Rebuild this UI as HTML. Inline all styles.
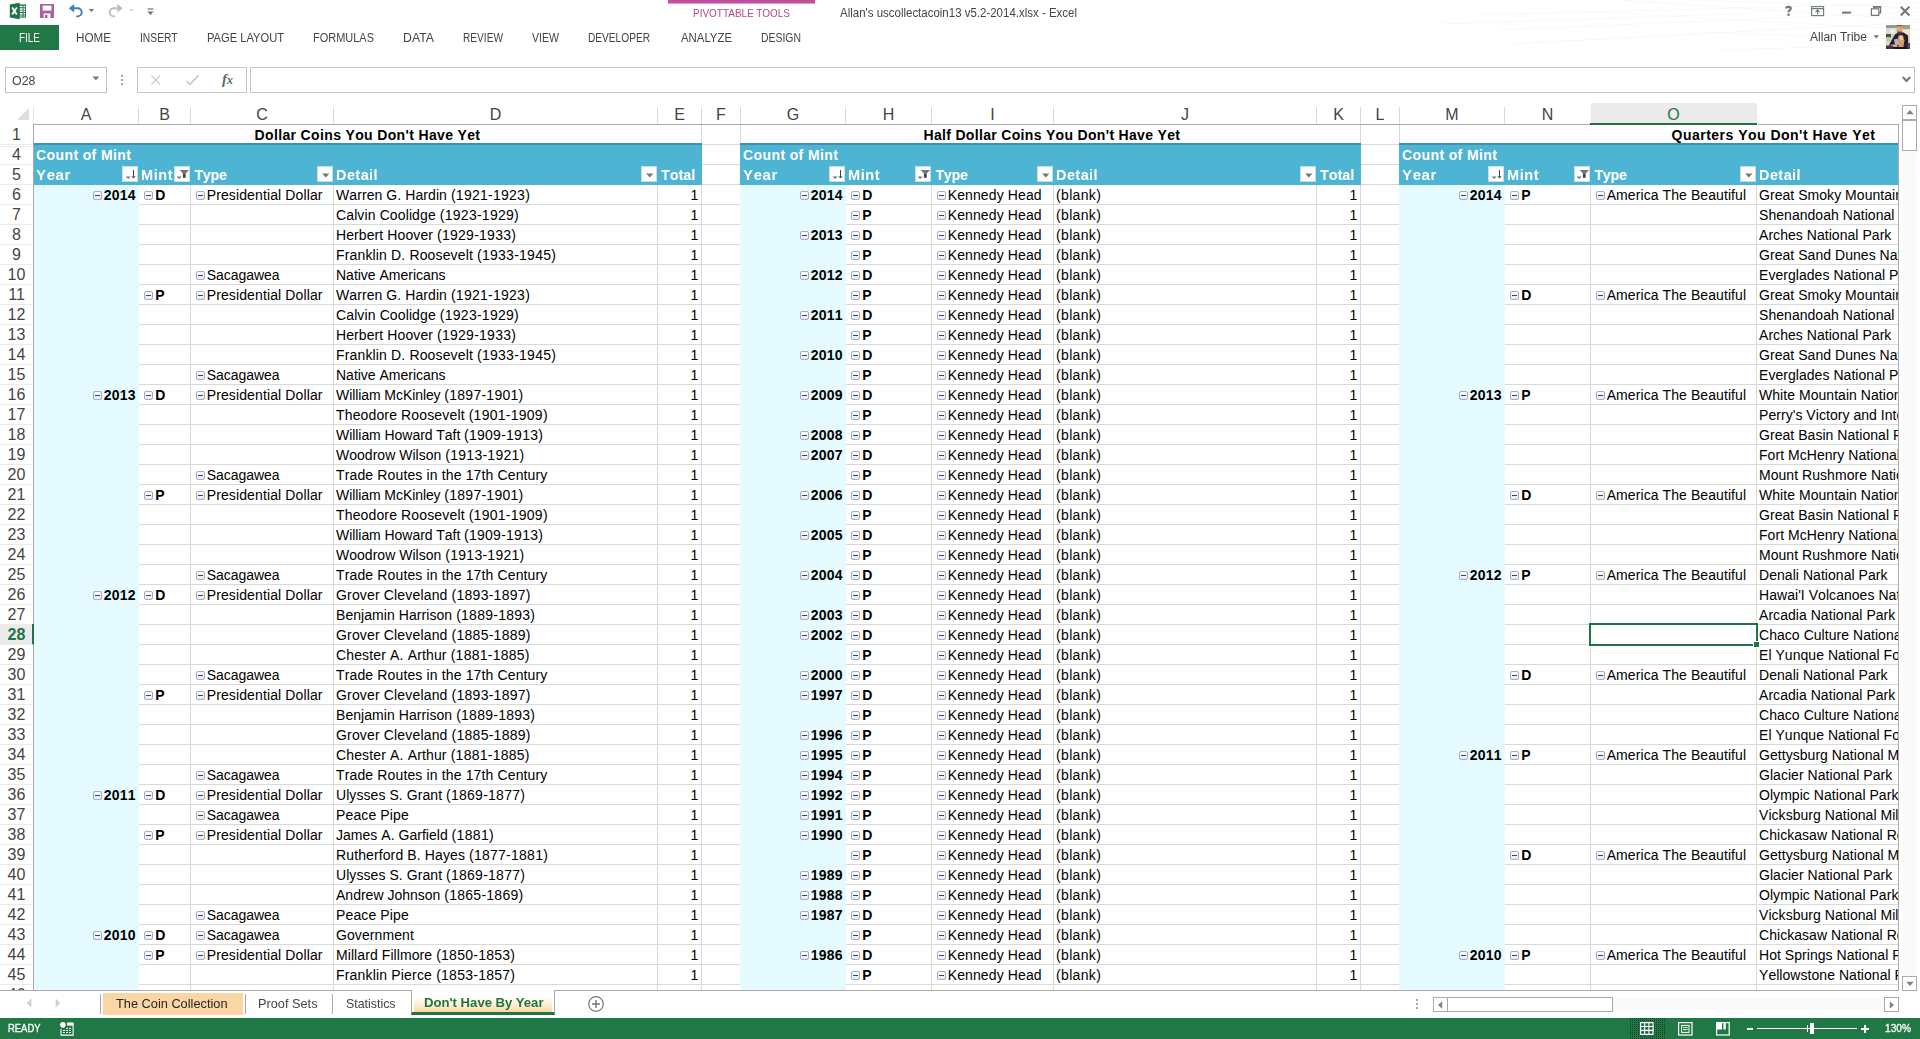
<!DOCTYPE html>
<html lang="en"><head><meta charset="utf-8"><title>Allan's uscollectacoin13 v5.2-2014.xlsx - Excel</title>
<style>
html,body{margin:0;padding:0}
body{width:1920px;height:1039px;position:relative;overflow:hidden;background:#fff;font-family:"Liberation Sans",sans-serif;color:#000}
div,span,svg{position:absolute;box-sizing:border-box}
.u{white-space:pre;transform-origin:0 50%}
.t{white-space:pre;font-kerning:none;font-size:14px;line-height:20px;height:20px;overflow:hidden}
.b{font-weight:bold}
.r{text-align:right}
.w{color:#fff}
.hd{font-size:16px;line-height:20px;height:20px;text-align:center;color:#444;white-space:pre}
.vl{width:1px;background:#d9d9d9}
.hl{height:1px;background:#d9d9d9}
.cb{width:9px;height:9px;border:1px solid #a4acc2;border-radius:2px;background:linear-gradient(#fff,#e6eaf8)}
.cb:after{content:"";position:absolute;left:1px;top:3px;width:5px;height:1px;background:#3a4262}
.dd{width:16px;height:16px;background:#fff;border:1px solid #c9dfe8}
#grid{left:0;top:103px;width:1898px;height:887px;overflow:hidden}

</style></head>
<body>
<svg style='left:1440px;top:0' width='480' height='60' viewBox='0 0 480 60'><g stroke='#f8f8f8' stroke-width='1' fill='none'>
<path d='M250 0L480 8M40 15L480 3M60 30L480 12M70 44L480 22M120 10L480 30M180 0L480 20M260 32L480 40M280 50L480 44M0 24L300 14'/></g></svg>
<svg style='left:9px;top:2px' width='18' height='18' viewBox='0 0 18 18'>
<rect x='9' y='2.4' width='8' height='13.2' fill='#217346'/>
<path d='M10.6 3.8h3v1.5h-3zM10.6 6.2h3v1.5h-3zM10.6 8.6h3v1.5h-3zM10.6 11h3v1.5h-3zM10.6 13.4h3v1.2h-3zM14.5 3.8h1.6v1.5h-1.6zM14.5 6.2h1.6v1.5h-1.6zM14.5 8.6h1.6v1.5h-1.6zM14.5 11h1.6v1.5h-1.6zM14.5 13.4h1.6v1.2h-1.6z' fill='#fff'/>
<path d='M0.8 2.6L10.6 0.8v16.4L0.8 15.4z' fill='#217346'/>
<path d='M3.1 5.5l4.7 7M7.8 5.5l-4.7 7' stroke='#fff' stroke-width='1.8' fill='none'/></svg>
<svg style='left:40px;top:4px' width='14' height='14' viewBox='0 0 14 14'>
<path d='M0 0h14v14H0z' fill='#a9609f'/><path d='M2.6 1.6h8.8v5H2.6z' fill='#fff'/><path d='M3.6 9.4h6.8V14H3.6z' fill='#fff'/><path d='M5 10.8h2.4V14H5z' fill='#a9609f'/></svg>
<svg style='left:68px;top:3px' width='28' height='15' viewBox='0 0 28 15'>
<path d='M3 5.2h6.6a4.1 4.1 0 0 1 0 8.2H8.2' fill='none' stroke='#3a82b6' stroke-width='1.9'/>
<path d='M0.8 5.2L6.2 0.9v8.6z' fill='#3a82b6'/><path d='M20.8 5.9h5.2l-2.6 3z' fill='#6b7474'/></svg>
<svg style='left:108px;top:3px' width='28' height='15' viewBox='0 0 28 15'>
<path d='M12.4 5.2H5.8a4.1 4.1 0 0 0 0 8.2h1.4' fill='none' stroke='#bdbdbd' stroke-width='1.9'/>
<path d='M14.8 5.2L9.4 0.9v8.6z' fill='#bdbdbd'/><path d='M21.2 5.9h4.6l-2.3 2.7z' fill='#d4d4d4'/></svg>
<svg style='left:147px;top:8px' width='7' height='8' viewBox='0 0 7 8'><path d='M0.6 0.4h5.8v1.2H0.6z' fill='#6b7474'/><path d='M0.4 3.4h6.2L3.5 6.9z' fill='#6b7474'/></svg>
<div style='left:668px;top:0;width:147px;height:3px;background:#c2519d'></div><div style='left:668px;top:3px;width:147px;height:1px;background:#dc9cc8'></div>
<svg style='left:1780px;top:3px' width='136' height='16' viewBox='0 0 136 16'>
<path d='M6.2 5.6c0-2.3 4.6-2.3 4.6 0 0 1.5-2.3 1.6-2.3 3.6' fill='none' stroke='#6f7979' stroke-width='2.2'/><rect x='7.3' y='10.6' width='2.4' height='2.2' fill='#6f7979'/>
<rect x='31.6' y='3.6' width='12' height='9' fill='none' stroke='#6f7979' stroke-width='1.1'/><path d='M31.6 5.6h12M37.6 11.4V7.2M35.6 9l2-2 2 2' fill='none' stroke='#6f7979' stroke-width='1.1'/>
<rect x='62' y='8.6' width='9' height='2' fill='#6f7979'/>
<rect x='91.4' y='5.8' width='7.4' height='6.6' fill='none' stroke='#6f7979' stroke-width='1.2'/><path d='M93.6 5.6V3.6h7v6.2h-1.8' fill='none' stroke='#6f7979' stroke-width='1.2'/><path d='M93.6 4h7' stroke='#6f7979' stroke-width='1.6'/>
<path d='M120.8 3.8l8.6 8.6M129.4 3.8l-8.6 8.6' stroke='#6f7979' stroke-width='2.1'/></svg>
<div style='left:0;top:25px;width:59px;height:25px;background:#1f7846'></div>
<svg style='left:1873px;top:35px' width='7' height='4' viewBox='0 0 7 4'><path d='M0.6 0.2h5.4l-2.7 3.2z' fill='#777'/></svg>
<svg style='left:1886px;top:25px' width='24' height='24' viewBox='0 0 24 24'>
<defs><filter id='bl' x='-10%' y='-10%' width='120%' height='120%'><feGaussianBlur stdDeviation='0.7'/></filter><clipPath id='cp'><rect width='24' height='24'/></clipPath></defs>
<g clip-path='url(#cp)'><rect width='24' height='24' fill='#c9d3c2'/><g filter='url(#bl)'>
<rect x='-1' y='-1' width='26' height='4' fill='#8f9c88'/><rect x='0' y='3' width='11' height='6' fill='#d3ddd0'/><rect x='4' y='4' width='5' height='4' fill='#e6efe4'/>
<rect x='17' y='1' width='8' height='3.4' fill='#98a58c'/><rect x='16.5' y='4.4' width='8' height='5' fill='#efe7b9'/><rect x='20' y='9' width='5' height='10' fill='#e3d9b4'/>
<rect x='-1' y='9' width='6' height='3.4' fill='#46553a'/><rect x='-1' y='12.4' width='5' height='4' fill='#c4cc9c'/><rect x='-1' y='16.4' width='5' height='4' fill='#cfe0d2'/>
<path d='M3.5 19L9 9.5l3-2h5.5l4.5 3 .5 13.5H3z' fill='#2a1a36'/>
<rect x='10.6' y='0.6' width='5.8' height='7.6' rx='2.4' fill='#dfa678'/><rect x='11' y='-0.5' width='5' height='1.8' fill='#8a5432'/><rect x='11.4' y='6.6' width='4.4' height='2' fill='#5a3a34'/>
<path d='M12.6 10.2h4.2l1.6 5-1 7h-4.6l-1.4-6z' fill='#d79a64'/><path d='M13.5 11l2.6-.4.8 4-2.8.6z' fill='#ecd2a8'/>
<path d='M8 14.4l3.6-1 1.2 6-3.8 1.4z' fill='#a9b8c8'/><path d='M4.6 19.6l6 .2 1.4 2-7 .2z' fill='#e8b48c'/>
<rect x='-1' y='20.6' width='8' height='4.4' fill='#3a3342'/><rect x='7' y='22' width='16' height='3' fill='#1c1422'/><rect x='21.4' y='18' width='3.6' height='7' fill='#4a4658'/>
</g></g></svg>
<div style='left:5px;top:67px;width:102px;height:26px;border:1px solid #c6c6c6;background:#fff'></div>
<svg style='left:92px;top:76px' width='8' height='5' viewBox='0 0 8 5'><path d='M0.4 0.4h7l-3.5 3.9z' fill='#777'/></svg>
<div style='left:121px;top:75px;width:2px;height:2px;background:#a8a8a8'></div><div style='left:121px;top:79px;width:2px;height:2px;background:#a8a8a8'></div><div style='left:121px;top:83px;width:2px;height:2px;background:#a8a8a8'></div>
<div style='left:137px;top:67px;width:110px;height:26px;border:1px solid #c6c6c6;background:#fff'></div>
<svg style='left:150px;top:74px' width='12' height='12' viewBox='0 0 12 12'><path d='M1.4 1.6l8.8 8.8M10.2 1.6l-8.8 8.8' stroke='#c9c9c9' stroke-width='1.3'/></svg>
<svg style='left:185px;top:74px' width='15' height='12' viewBox='0 0 15 12'><path d='M1.6 7l3.4 3.4L13.4 1.4' fill='none' stroke='#c9c9c9' stroke-width='1.7'/></svg>
<span style='left:222px;top:70px;font:italic bold 15px "Liberation Serif",serif;color:#5f6b66;line-height:18px;letter-spacing:-.3px'>f<span style='position:static;font-size:12.5px'>x</span></span>
<div style='left:250px;top:67px;width:1665px;height:26px;border:1px solid #c6c6c6;background:#fff'></div>
<svg style='left:1902px;top:76px' width='9' height='7' viewBox='0 0 9 7'><path d='M0.8 1l3.7 4 3.7-4' fill='none' stroke='#6f7979' stroke-width='1.9'/></svg>
<div style='left:1902px;top:105px;width:15px;height:15px;border:1px solid #ababab;background:#fff'></div>
<svg style='left:1906px;top:109px' width='8' height='6' viewBox='0 0 8 6'><path d='M0.3 5.2L4 1l3.7 4.2z' fill='#7d8585'/></svg>
<div style='left:1902px;top:120px;width:15px;height:31px;border:1px solid #ababab;background:#fff'></div>
<div style='left:1903px;top:151px;width:13px;height:825px;background:#fafafa'></div>
<div style='left:1902px;top:976px;width:15px;height:15px;border:1px solid #ababab;background:#fff'></div>
<svg style='left:1906px;top:981px' width='8' height='6' viewBox='0 0 8 6'><path d='M0.3 0.8L4 5l3.7-4.2z' fill='#7d8585'/></svg>
<div style='left:1898px;top:124px;width:1px;height:867px;background:#ababab'></div>
<div style='left:1416px;top:999px;width:2px;height:2px;background:#a8a8a8'></div><div style='left:1416px;top:1003px;width:2px;height:2px;background:#a8a8a8'></div><div style='left:1416px;top:1007px;width:2px;height:2px;background:#a8a8a8'></div>
<div style='left:1433px;top:997px;width:15px;height:15px;border:1px solid #ababab;background:#fff'></div>
<svg style='left:1437px;top:1001px' width='6' height='8' viewBox='0 0 6 8'><path d='M5.2 0.3L1 4l4.2 3.7z' fill='#7d8585'/></svg>
<div style='left:1447px;top:997px;width:166px;height:15px;border:1px solid #ababab;background:#fff'></div>
<div style='left:1613px;top:998px;width:271px;height:13px;background:#fafafa'></div>
<div style='left:1884px;top:997px;width:15px;height:15px;border:1px solid #ababab;background:#fff'></div>
<svg style='left:1889px;top:1001px' width='6' height='8' viewBox='0 0 6 8'><path d='M0.8 0.3L5 4 0.8 7.7z' fill='#7d8585'/></svg>
<div style='left:0;top:990px;width:1899px;height:1px;background:#ababab'></div>
<svg style='left:26px;top:998px' width='6' height='10' viewBox='0 0 6 10'><path d='M5.4 0.6L0.8 5l4.6 4.4z' fill='#cfcfcf'/></svg>
<svg style='left:55px;top:998px' width='6' height='10' viewBox='0 0 6 10'><path d='M0.6 0.6L5.2 5 0.6 9.4z' fill='#cfcfcf'/></svg>
<div style='left:103px;top:993px;width:140px;height:22px;background:#fcd5a4'></div>
<div style='left:100px;top:994px;width:1px;height:20px;background:#ababab'></div>
<div style='left:245px;top:994px;width:1px;height:20px;background:#ababab'></div>
<div style='left:332px;top:994px;width:1px;height:20px;background:#ababab'></div>
<div style='left:411px;top:990px;width:144px;height:25px;background:#fff;border-left:1px solid #ababab;border-right:1px solid #ababab;border-bottom:3px solid #217346'><div style='left:2px;top:3px;width:138px;height:19px;background:linear-gradient(#fff 20%,#fdeccb 70%,#fbd999)'></div></div>
<svg style='left:587px;top:995px' width='18' height='18' viewBox='0 0 18 18'><circle cx='9' cy='9' r='7.3' fill='#fff' stroke='#767676' stroke-width='1.2'/><path d='M9 5v8M5 9h8' stroke='#767676' stroke-width='1.4'/></svg>
<div style='left:0;top:1018px;width:1920px;height:21px;background:#1f7846'></div>
<svg style='left:60px;top:1021px' width='14' height='15' viewBox='0 0 14 15'>
<path d='M7.1 2h6v12.1H1V8' fill='none' stroke='#fff' stroke-width='1.1'/><rect x='7.1' y='2' width='6' height='2.6' fill='#fff'/>
<circle cx='2.9' cy='3.9' r='3.5' fill='#1a6a3e'/><circle cx='2.9' cy='3.9' r='2.8' fill='#fff'/>
<path d='M6 7.4h2M9 7.4h2M3 9.5h2M6 9.5h2M9 9.5h2M3 11.5h2M6 11.5h2M9 11.5h2' stroke='#e8fff0' stroke-width='1'/></svg>
<div style='left:1629px;top:1018px;width:37px;height:21px;background:repeating-conic-gradient(#143f28 0 25%,#1f7846 0 100%) 0 0/2px 2px'></div>
<svg style='left:1640px;top:1022px' width='14' height='13' viewBox='0 0 14 13'><rect x='.6' y='.6' width='12.4' height='11.8' fill='none' stroke='#fff' stroke-width='1.2'/><path d='M4.7 0v13M8.9 0v13M0 4.5h14M0 8.4h14' stroke='#fff' stroke-width='1.1'/></svg>
<svg style='left:1678px;top:1022px' width='15' height='14' viewBox='0 0 15 14'><rect x='.6' y='.6' width='13.4' height='12.4' fill='none' stroke='#fff' stroke-width='1.2'/><rect x='3.6' y='3.4' width='7.4' height='7' fill='none' stroke='#fff' stroke-width='1'/><path d='M5 5.6h4.6M5 7.6h4.6' stroke='#fff' stroke-width='.9'/></svg>
<svg style='left:1716px;top:1022px' width='14' height='14' viewBox='0 0 14 14'><rect x='.6' y='.6' width='12.6' height='12.4' fill='none' stroke='#fff' stroke-width='1.2'/><path d='M1 1h5v6.4H1zM7.4 1H9.8v6.4H7.4z' fill='#fff'/></svg>
<div style='left:1747px;top:1028px;width:6px;height:2px;background:#fff'></div>
<div style='left:1757px;top:1028px;width:100px;height:1px;background:#fff'></div>
<div style='left:1807px;top:1025px;width:1px;height:7px;background:#fff'></div>
<div style='left:1810px;top:1023px;width:4px;height:11px;background:#fff'></div>
<div style='left:1861px;top:1028px;width:8px;height:2px;background:#fff'></div><div style='left:1864px;top:1025px;width:2px;height:8px;background:#fff'></div>
<div id='grid'><div class='hl' style='left:34px;top:41px;width:1864px'></div>
<div class='hl' style='left:34px;top:61px;width:1864px'></div>
<div class='hl' style='left:34px;top:81px;width:1864px'></div>
<div class='hl' style='left:34px;top:101px;width:1864px'></div>
<div class='hl' style='left:34px;top:121px;width:1864px'></div>
<div class='hl' style='left:34px;top:141px;width:1864px'></div>
<div class='hl' style='left:34px;top:161px;width:1864px'></div>
<div class='hl' style='left:34px;top:181px;width:1864px'></div>
<div class='hl' style='left:34px;top:201px;width:1864px'></div>
<div class='hl' style='left:34px;top:221px;width:1864px'></div>
<div class='hl' style='left:34px;top:241px;width:1864px'></div>
<div class='hl' style='left:34px;top:261px;width:1864px'></div>
<div class='hl' style='left:34px;top:281px;width:1864px'></div>
<div class='hl' style='left:34px;top:301px;width:1864px'></div>
<div class='hl' style='left:34px;top:321px;width:1864px'></div>
<div class='hl' style='left:34px;top:341px;width:1864px'></div>
<div class='hl' style='left:34px;top:361px;width:1864px'></div>
<div class='hl' style='left:34px;top:381px;width:1864px'></div>
<div class='hl' style='left:34px;top:401px;width:1864px'></div>
<div class='hl' style='left:34px;top:421px;width:1864px'></div>
<div class='hl' style='left:34px;top:441px;width:1864px'></div>
<div class='hl' style='left:34px;top:461px;width:1864px'></div>
<div class='hl' style='left:34px;top:481px;width:1864px'></div>
<div class='hl' style='left:34px;top:501px;width:1864px'></div>
<div class='hl' style='left:34px;top:521px;width:1864px'></div>
<div class='hl' style='left:34px;top:541px;width:1864px'></div>
<div class='hl' style='left:34px;top:561px;width:1864px'></div>
<div class='hl' style='left:34px;top:581px;width:1864px'></div>
<div class='hl' style='left:34px;top:601px;width:1864px'></div>
<div class='hl' style='left:34px;top:621px;width:1864px'></div>
<div class='hl' style='left:34px;top:641px;width:1864px'></div>
<div class='hl' style='left:34px;top:661px;width:1864px'></div>
<div class='hl' style='left:34px;top:681px;width:1864px'></div>
<div class='hl' style='left:34px;top:701px;width:1864px'></div>
<div class='hl' style='left:34px;top:721px;width:1864px'></div>
<div class='hl' style='left:34px;top:741px;width:1864px'></div>
<div class='hl' style='left:34px;top:761px;width:1864px'></div>
<div class='hl' style='left:34px;top:781px;width:1864px'></div>
<div class='hl' style='left:34px;top:801px;width:1864px'></div>
<div class='hl' style='left:34px;top:821px;width:1864px'></div>
<div class='hl' style='left:34px;top:841px;width:1864px'></div>
<div class='hl' style='left:34px;top:861px;width:1864px'></div>
<div class='hl' style='left:34px;top:881px;width:1864px'></div>
<div class='hl' style='left:34px;top:901px;width:1864px'></div>
<div class='vl' style='left:190px;top:22px;height:865px'></div>
<div class='vl' style='left:333px;top:22px;height:865px'></div>
<div class='vl' style='left:657px;top:22px;height:865px'></div>
<div class='vl' style='left:701px;top:22px;height:865px'></div>
<div class='vl' style='left:740px;top:22px;height:865px'></div>
<div class='vl' style='left:931px;top:22px;height:865px'></div>
<div class='vl' style='left:1053px;top:22px;height:865px'></div>
<div class='vl' style='left:1316px;top:22px;height:865px'></div>
<div class='vl' style='left:1360px;top:22px;height:865px'></div>
<div class='vl' style='left:1399px;top:22px;height:865px'></div>
<div class='vl' style='left:1590px;top:22px;height:865px'></div>
<div class='vl' style='left:1756px;top:22px;height:865px'></div>
<div style='left:34px;top:22px;width:667px;height:19px;background:#fff'></div>
<div class='t b' style='left:34px;top:22px;width:667px;text-align:center;overflow:visible;letter-spacing:0.35px'>Dollar Coins You Don&#x27;t Have Yet</div>
<div style='left:741px;top:22px;width:619px;height:19px;background:#fff'></div>
<div class='t b' style='left:742.4px;top:22px;width:619px;text-align:center;overflow:visible;letter-spacing:0.32px'>Half Dollar Coins You Don&#x27;t Have Yet</div>
<div style='left:1400px;top:22px;width:498px;height:19px;background:#fff'></div>
<div class='t b' style='left:1473.5px;top:22px;width:600px;text-align:center;overflow:visible;letter-spacing:0.485px'>Quarters You Don&#x27;t Have Yet</div>
<div style='left:34px;top:40px;width:668px;height:42px;background:#4db4d4;border-top:2px solid #3a93b0'></div>
<div style='left:34px;top:82px;width:105px;height:805px;background:#e6fbff'></div>
<div class='t b w' style='left:36.1px;top:42px;width:200px;letter-spacing:.38px'>Count of Mint</div>
<div class='t b w' style='left:36.0px;top:62px;width:104px;letter-spacing:0.55px;transform:scaleX(1.075);transform-origin:0 50%'>Year</div>
<div class='dd' style='left:122px;top:63px'><svg style='left:0;top:0' width='16' height='16' viewBox='0 0 16 16'><path d='M2.6 9.4h5l-2.5 2.7z' fill='#6e7878'/><path d='M10.5 3v7.6M8.9 9.2l1.6 1.9 1.6-1.9' stroke='#3c4444' stroke-width='1' fill='none'/></svg></div>
<div class='t b w' style='left:140.5px;top:62px;width:51px;letter-spacing:0.5px;transform:scaleX(1.04);transform-origin:0 50%'>Mint</div>
<div class='dd' style='left:174px;top:63px'><svg style='left:0;top:0' width='16' height='16' viewBox='0 0 16 16'><path d='M1.6 9.4h5l-2.5 2.7z' fill='#6e7878'/><path d='M4.6 3h9.4l-3.3 3.6h-2.8z' fill='#6e7878'/><path d='M7.9 6.4h2.8v4.4h-2.8z' fill='#3f454f'/></svg></div>
<div class='t b w' style='left:194.4px;top:62px;width:142px;letter-spacing:-0.07px;transform:scaleX(1);transform-origin:0 50%'>Type</div>
<div class='dd' style='left:317px;top:63px'><svg style='left:0;top:0' width='16' height='16' viewBox='0 0 16 16'><path d='M4.2 6.6h7.2l-3.6 3.8z' fill='#6e7878'/></svg></div>
<div class='t b w' style='left:335.5px;top:62px;width:323px;letter-spacing:0.45px;transform:scaleX(1.03);transform-origin:0 50%'>Detail</div>
<div class='dd' style='left:641px;top:63px'><svg style='left:0;top:0' width='16' height='16' viewBox='0 0 16 16'><path d='M4.2 6.6h7.2l-3.6 3.8z' fill='#6e7878'/></svg></div>
<div class='t b w' style='left:661px;top:62px;width:60px;letter-spacing:.2px'>Total</div>
<div class='t b r' style='left:34px;top:82px;width:101.69999999999999px;letter-spacing:0.214px;'>2014</div>
<div class='cb' style='left:93px;top:88px'></div>
<div class='cb' style='left:144px;top:88px'></div>
<div class='t b' style='left:155.2px;top:82px;width:30px;letter-spacing:-0.110px;'>D</div>
<div class='cb' style='left:196px;top:88px'></div>
<div class='t ' style='left:206.7px;top:82px;width:126px;letter-spacing:0.121px'>Presidential Dollar</div>
<div class='t ' style='left:336px;top:82px;width:321px;letter-spacing:0.080px'>Warren G. Hardin <span style='position:static;letter-spacing:0.256px'>(1921-1923)</span></div>
<div class='t r' style='left:658px;top:82px;width:40.39999999999998px;letter-spacing:.045px;'>1</div>
<div class='t ' style='left:336px;top:102px;width:321px;letter-spacing:0.119px'>Calvin Coolidge <span style='position:static;letter-spacing:0.256px'>(1923-1929)</span></div>
<div class='t r' style='left:658px;top:102px;width:40.39999999999998px;letter-spacing:.045px;'>1</div>
<div class='t ' style='left:336px;top:122px;width:321px;letter-spacing:0.096px'>Herbert Hoover <span style='position:static;letter-spacing:0.256px'>(1929-1933)</span></div>
<div class='t r' style='left:658px;top:122px;width:40.39999999999998px;letter-spacing:.045px;'>1</div>
<div class='t ' style='left:336px;top:142px;width:321px;letter-spacing:0.151px'>Franklin D. Roosevelt <span style='position:static;letter-spacing:0.256px'>(1933-1945)</span></div>
<div class='t r' style='left:658px;top:142px;width:40.39999999999998px;letter-spacing:.045px;'>1</div>
<div class='cb' style='left:196px;top:168px'></div>
<div class='t ' style='left:206.7px;top:162px;width:126px;letter-spacing:-0.029px'>Sacagawea</div>
<div class='t ' style='left:336px;top:162px;width:321px;letter-spacing:-0.010px'>Native Americans</div>
<div class='t r' style='left:658px;top:162px;width:40.39999999999998px;letter-spacing:.045px;'>1</div>
<div class='cb' style='left:144px;top:188px'></div>
<div class='t b' style='left:155.2px;top:182px;width:30px;letter-spacing:-0.338px;'>P</div>
<div class='cb' style='left:196px;top:188px'></div>
<div class='t ' style='left:206.7px;top:182px;width:126px;letter-spacing:0.121px'>Presidential Dollar</div>
<div class='t ' style='left:336px;top:182px;width:321px;letter-spacing:0.080px'>Warren G. Hardin <span style='position:static;letter-spacing:0.256px'>(1921-1923)</span></div>
<div class='t r' style='left:658px;top:182px;width:40.39999999999998px;letter-spacing:.045px;'>1</div>
<div class='t ' style='left:336px;top:202px;width:321px;letter-spacing:0.119px'>Calvin Coolidge <span style='position:static;letter-spacing:0.256px'>(1923-1929)</span></div>
<div class='t r' style='left:658px;top:202px;width:40.39999999999998px;letter-spacing:.045px;'>1</div>
<div class='t ' style='left:336px;top:222px;width:321px;letter-spacing:0.096px'>Herbert Hoover <span style='position:static;letter-spacing:0.256px'>(1929-1933)</span></div>
<div class='t r' style='left:658px;top:222px;width:40.39999999999998px;letter-spacing:.045px;'>1</div>
<div class='t ' style='left:336px;top:242px;width:321px;letter-spacing:0.151px'>Franklin D. Roosevelt <span style='position:static;letter-spacing:0.256px'>(1933-1945)</span></div>
<div class='t r' style='left:658px;top:242px;width:40.39999999999998px;letter-spacing:.045px;'>1</div>
<div class='cb' style='left:196px;top:268px'></div>
<div class='t ' style='left:206.7px;top:262px;width:126px;letter-spacing:-0.029px'>Sacagawea</div>
<div class='t ' style='left:336px;top:262px;width:321px;letter-spacing:-0.010px'>Native Americans</div>
<div class='t r' style='left:658px;top:262px;width:40.39999999999998px;letter-spacing:.045px;'>1</div>
<div class='t b r' style='left:34px;top:282px;width:101.69999999999999px;letter-spacing:0.214px;'>2013</div>
<div class='cb' style='left:93px;top:288px'></div>
<div class='cb' style='left:144px;top:288px'></div>
<div class='t b' style='left:155.2px;top:282px;width:30px;letter-spacing:-0.110px;'>D</div>
<div class='cb' style='left:196px;top:288px'></div>
<div class='t ' style='left:206.7px;top:282px;width:126px;letter-spacing:0.121px'>Presidential Dollar</div>
<div class='t ' style='left:336px;top:282px;width:321px;letter-spacing:-0.078px'>William McKinley <span style='position:static;letter-spacing:0.256px'>(1897-1901)</span></div>
<div class='t r' style='left:658px;top:282px;width:40.39999999999998px;letter-spacing:.045px;'>1</div>
<div class='t ' style='left:336px;top:302px;width:321px;letter-spacing:0.144px'>Theodore Roosevelt <span style='position:static;letter-spacing:0.256px'>(1901-1909)</span></div>
<div class='t r' style='left:658px;top:302px;width:40.39999999999998px;letter-spacing:.045px;'>1</div>
<div class='t ' style='left:336px;top:322px;width:321px;letter-spacing:-0.054px'>William Howard Taft <span style='position:static;letter-spacing:0.256px'>(1909-1913)</span></div>
<div class='t r' style='left:658px;top:322px;width:40.39999999999998px;letter-spacing:.045px;'>1</div>
<div class='t ' style='left:336px;top:342px;width:321px;letter-spacing:0.028px'>Woodrow Wilson <span style='position:static;letter-spacing:0.256px'>(1913-1921)</span></div>
<div class='t r' style='left:658px;top:342px;width:40.39999999999998px;letter-spacing:.045px;'>1</div>
<div class='cb' style='left:196px;top:368px'></div>
<div class='t ' style='left:206.7px;top:362px;width:126px;letter-spacing:-0.029px'>Sacagawea</div>
<div class='t ' style='left:336px;top:362px;width:321px;letter-spacing:0.140px'>Trade Routes in the 17th Century</div>
<div class='t r' style='left:658px;top:362px;width:40.39999999999998px;letter-spacing:.045px;'>1</div>
<div class='cb' style='left:144px;top:388px'></div>
<div class='t b' style='left:155.2px;top:382px;width:30px;letter-spacing:-0.338px;'>P</div>
<div class='cb' style='left:196px;top:388px'></div>
<div class='t ' style='left:206.7px;top:382px;width:126px;letter-spacing:0.121px'>Presidential Dollar</div>
<div class='t ' style='left:336px;top:382px;width:321px;letter-spacing:-0.078px'>William McKinley <span style='position:static;letter-spacing:0.256px'>(1897-1901)</span></div>
<div class='t r' style='left:658px;top:382px;width:40.39999999999998px;letter-spacing:.045px;'>1</div>
<div class='t ' style='left:336px;top:402px;width:321px;letter-spacing:0.144px'>Theodore Roosevelt <span style='position:static;letter-spacing:0.256px'>(1901-1909)</span></div>
<div class='t r' style='left:658px;top:402px;width:40.39999999999998px;letter-spacing:.045px;'>1</div>
<div class='t ' style='left:336px;top:422px;width:321px;letter-spacing:-0.054px'>William Howard Taft <span style='position:static;letter-spacing:0.256px'>(1909-1913)</span></div>
<div class='t r' style='left:658px;top:422px;width:40.39999999999998px;letter-spacing:.045px;'>1</div>
<div class='t ' style='left:336px;top:442px;width:321px;letter-spacing:0.028px'>Woodrow Wilson <span style='position:static;letter-spacing:0.256px'>(1913-1921)</span></div>
<div class='t r' style='left:658px;top:442px;width:40.39999999999998px;letter-spacing:.045px;'>1</div>
<div class='cb' style='left:196px;top:468px'></div>
<div class='t ' style='left:206.7px;top:462px;width:126px;letter-spacing:-0.029px'>Sacagawea</div>
<div class='t ' style='left:336px;top:462px;width:321px;letter-spacing:0.140px'>Trade Routes in the 17th Century</div>
<div class='t r' style='left:658px;top:462px;width:40.39999999999998px;letter-spacing:.045px;'>1</div>
<div class='t b r' style='left:34px;top:482px;width:101.69999999999999px;letter-spacing:0.214px;'>2012</div>
<div class='cb' style='left:93px;top:488px'></div>
<div class='cb' style='left:144px;top:488px'></div>
<div class='t b' style='left:155.2px;top:482px;width:30px;letter-spacing:-0.110px;'>D</div>
<div class='cb' style='left:196px;top:488px'></div>
<div class='t ' style='left:206.7px;top:482px;width:126px;letter-spacing:0.121px'>Presidential Dollar</div>
<div class='t ' style='left:336px;top:482px;width:321px;letter-spacing:0.162px'>Grover Cleveland <span style='position:static;letter-spacing:0.256px'>(1893-1897)</span></div>
<div class='t r' style='left:658px;top:482px;width:40.39999999999998px;letter-spacing:.045px;'>1</div>
<div class='t ' style='left:336px;top:502px;width:321px;letter-spacing:0.060px'>Benjamin Harrison <span style='position:static;letter-spacing:0.256px'>(1889-1893)</span></div>
<div class='t r' style='left:658px;top:502px;width:40.39999999999998px;letter-spacing:.045px;'>1</div>
<div class='t ' style='left:336px;top:522px;width:321px;letter-spacing:0.162px'>Grover Cleveland <span style='position:static;letter-spacing:0.256px'>(1885-1889)</span></div>
<div class='t r' style='left:658px;top:522px;width:40.39999999999998px;letter-spacing:.045px;'>1</div>
<div class='t ' style='left:336px;top:542px;width:321px;letter-spacing:0.147px'>Chester A. Arthur <span style='position:static;letter-spacing:0.256px'>(1881-1885)</span></div>
<div class='t r' style='left:658px;top:542px;width:40.39999999999998px;letter-spacing:.045px;'>1</div>
<div class='cb' style='left:196px;top:568px'></div>
<div class='t ' style='left:206.7px;top:562px;width:126px;letter-spacing:-0.029px'>Sacagawea</div>
<div class='t ' style='left:336px;top:562px;width:321px;letter-spacing:0.140px'>Trade Routes in the 17th Century</div>
<div class='t r' style='left:658px;top:562px;width:40.39999999999998px;letter-spacing:.045px;'>1</div>
<div class='cb' style='left:144px;top:588px'></div>
<div class='t b' style='left:155.2px;top:582px;width:30px;letter-spacing:-0.338px;'>P</div>
<div class='cb' style='left:196px;top:588px'></div>
<div class='t ' style='left:206.7px;top:582px;width:126px;letter-spacing:0.121px'>Presidential Dollar</div>
<div class='t ' style='left:336px;top:582px;width:321px;letter-spacing:0.162px'>Grover Cleveland <span style='position:static;letter-spacing:0.256px'>(1893-1897)</span></div>
<div class='t r' style='left:658px;top:582px;width:40.39999999999998px;letter-spacing:.045px;'>1</div>
<div class='t ' style='left:336px;top:602px;width:321px;letter-spacing:0.060px'>Benjamin Harrison <span style='position:static;letter-spacing:0.256px'>(1889-1893)</span></div>
<div class='t r' style='left:658px;top:602px;width:40.39999999999998px;letter-spacing:.045px;'>1</div>
<div class='t ' style='left:336px;top:622px;width:321px;letter-spacing:0.162px'>Grover Cleveland <span style='position:static;letter-spacing:0.256px'>(1885-1889)</span></div>
<div class='t r' style='left:658px;top:622px;width:40.39999999999998px;letter-spacing:.045px;'>1</div>
<div class='t ' style='left:336px;top:642px;width:321px;letter-spacing:0.147px'>Chester A. Arthur <span style='position:static;letter-spacing:0.256px'>(1881-1885)</span></div>
<div class='t r' style='left:658px;top:642px;width:40.39999999999998px;letter-spacing:.045px;'>1</div>
<div class='cb' style='left:196px;top:668px'></div>
<div class='t ' style='left:206.7px;top:662px;width:126px;letter-spacing:-0.029px'>Sacagawea</div>
<div class='t ' style='left:336px;top:662px;width:321px;letter-spacing:0.140px'>Trade Routes in the 17th Century</div>
<div class='t r' style='left:658px;top:662px;width:40.39999999999998px;letter-spacing:.045px;'>1</div>
<div class='t b r' style='left:34px;top:682px;width:101.69999999999999px;letter-spacing:0.214px;'>2011</div>
<div class='cb' style='left:93px;top:688px'></div>
<div class='cb' style='left:144px;top:688px'></div>
<div class='t b' style='left:155.2px;top:682px;width:30px;letter-spacing:-0.110px;'>D</div>
<div class='cb' style='left:196px;top:688px'></div>
<div class='t ' style='left:206.7px;top:682px;width:126px;letter-spacing:0.121px'>Presidential Dollar</div>
<div class='t ' style='left:336px;top:682px;width:321px;letter-spacing:0.067px'>Ulysses S. Grant <span style='position:static;letter-spacing:0.256px'>(1869-1877)</span></div>
<div class='t r' style='left:658px;top:682px;width:40.39999999999998px;letter-spacing:.045px;'>1</div>
<div class='cb' style='left:196px;top:708px'></div>
<div class='t ' style='left:206.7px;top:702px;width:126px;letter-spacing:-0.029px'>Sacagawea</div>
<div class='t ' style='left:336px;top:702px;width:321px;letter-spacing:0.129px'>Peace Pipe</div>
<div class='t r' style='left:658px;top:702px;width:40.39999999999998px;letter-spacing:.045px;'>1</div>
<div class='cb' style='left:144px;top:728px'></div>
<div class='t b' style='left:155.2px;top:722px;width:30px;letter-spacing:-0.338px;'>P</div>
<div class='cb' style='left:196px;top:728px'></div>
<div class='t ' style='left:206.7px;top:722px;width:126px;letter-spacing:0.121px'>Presidential Dollar</div>
<div class='t ' style='left:336px;top:722px;width:321px;letter-spacing:0.025px'>James A. Garfield <span style='position:static;letter-spacing:0.314px'>(1881)</span></div>
<div class='t r' style='left:658px;top:722px;width:40.39999999999998px;letter-spacing:.045px;'>1</div>
<div class='t ' style='left:336px;top:742px;width:321px;letter-spacing:0.115px'>Rutherford B. Hayes <span style='position:static;letter-spacing:0.256px'>(1877-1881)</span></div>
<div class='t r' style='left:658px;top:742px;width:40.39999999999998px;letter-spacing:.045px;'>1</div>
<div class='t ' style='left:336px;top:762px;width:321px;letter-spacing:0.067px'>Ulysses S. Grant <span style='position:static;letter-spacing:0.256px'>(1869-1877)</span></div>
<div class='t r' style='left:658px;top:762px;width:40.39999999999998px;letter-spacing:.045px;'>1</div>
<div class='t ' style='left:336px;top:782px;width:321px;letter-spacing:0.009px'>Andrew Johnson <span style='position:static;letter-spacing:0.256px'>(1865-1869)</span></div>
<div class='t r' style='left:658px;top:782px;width:40.39999999999998px;letter-spacing:.045px;'>1</div>
<div class='cb' style='left:196px;top:808px'></div>
<div class='t ' style='left:206.7px;top:802px;width:126px;letter-spacing:-0.029px'>Sacagawea</div>
<div class='t ' style='left:336px;top:802px;width:321px;letter-spacing:0.129px'>Peace Pipe</div>
<div class='t r' style='left:658px;top:802px;width:40.39999999999998px;letter-spacing:.045px;'>1</div>
<div class='t b r' style='left:34px;top:822px;width:101.69999999999999px;letter-spacing:0.214px;'>2010</div>
<div class='cb' style='left:93px;top:828px'></div>
<div class='cb' style='left:144px;top:828px'></div>
<div class='t b' style='left:155.2px;top:822px;width:30px;letter-spacing:-0.110px;'>D</div>
<div class='cb' style='left:196px;top:828px'></div>
<div class='t ' style='left:206.7px;top:822px;width:126px;letter-spacing:-0.029px'>Sacagawea</div>
<div class='t ' style='left:336px;top:822px;width:321px;letter-spacing:0.086px'>Government</div>
<div class='t r' style='left:658px;top:822px;width:40.39999999999998px;letter-spacing:.045px;'>1</div>
<div class='cb' style='left:144px;top:848px'></div>
<div class='t b' style='left:155.2px;top:842px;width:30px;letter-spacing:-0.338px;'>P</div>
<div class='cb' style='left:196px;top:848px'></div>
<div class='t ' style='left:206.7px;top:842px;width:126px;letter-spacing:0.121px'>Presidential Dollar</div>
<div class='t ' style='left:336px;top:842px;width:321px;letter-spacing:0.079px'>Millard Fillmore <span style='position:static;letter-spacing:0.256px'>(1850-1853)</span></div>
<div class='t r' style='left:658px;top:842px;width:40.39999999999998px;letter-spacing:.045px;'>1</div>
<div class='t ' style='left:336px;top:862px;width:321px;letter-spacing:0.180px'>Franklin Pierce <span style='position:static;letter-spacing:0.256px'>(1853-1857)</span></div>
<div class='t r' style='left:658px;top:862px;width:40.39999999999998px;letter-spacing:.045px;'>1</div>
<div style='left:740px;top:40px;width:621px;height:42px;background:#4db4d4;border-top:2px solid #3a93b0'></div>
<div style='left:740px;top:82px;width:106px;height:805px;background:#e6fbff'></div>
<div class='t b w' style='left:743.1px;top:42px;width:200px;letter-spacing:.38px'>Count of Mint</div>
<div class='t b w' style='left:743.0px;top:62px;width:104px;letter-spacing:0.55px;transform:scaleX(1.075);transform-origin:0 50%'>Year</div>
<div class='dd' style='left:829px;top:63px'><svg style='left:0;top:0' width='16' height='16' viewBox='0 0 16 16'><path d='M2.6 9.4h5l-2.5 2.7z' fill='#6e7878'/><path d='M10.5 3v7.6M8.9 9.2l1.6 1.9 1.6-1.9' stroke='#3c4444' stroke-width='1' fill='none'/></svg></div>
<div class='t b w' style='left:847.5px;top:62px;width:85px;letter-spacing:0.5px;transform:scaleX(1.04);transform-origin:0 50%'>Mint</div>
<div class='dd' style='left:915px;top:63px'><svg style='left:0;top:0' width='16' height='16' viewBox='0 0 16 16'><path d='M1.6 9.4h5l-2.5 2.7z' fill='#6e7878'/><path d='M4.6 3h9.4l-3.3 3.6h-2.8z' fill='#6e7878'/><path d='M7.9 6.4h2.8v4.4h-2.8z' fill='#3f454f'/></svg></div>
<div class='t b w' style='left:935.4px;top:62px;width:121px;letter-spacing:-0.07px;transform:scaleX(1);transform-origin:0 50%'>Type</div>
<div class='dd' style='left:1037px;top:63px'><svg style='left:0;top:0' width='16' height='16' viewBox='0 0 16 16'><path d='M4.2 6.6h7.2l-3.6 3.8z' fill='#6e7878'/></svg></div>
<div class='t b w' style='left:1055.5px;top:62px;width:262px;letter-spacing:0.45px;transform:scaleX(1.03);transform-origin:0 50%'>Detail</div>
<div class='dd' style='left:1300px;top:63px'><svg style='left:0;top:0' width='16' height='16' viewBox='0 0 16 16'><path d='M4.2 6.6h7.2l-3.6 3.8z' fill='#6e7878'/></svg></div>
<div class='t b w' style='left:1320px;top:62px;width:60px;letter-spacing:.2px'>Total</div>
<div class='t b r' style='left:741px;top:82px;width:101.70000000000005px;letter-spacing:0.214px;'>2014</div>
<div class='cb' style='left:800px;top:88px'></div>
<div class='cb' style='left:851px;top:88px'></div>
<div class='t b' style='left:862.2px;top:82px;width:30px;letter-spacing:-0.110px;'>D</div>
<div class='cb' style='left:937px;top:88px'></div>
<div class='t ' style='left:947.7px;top:82px;width:105px;letter-spacing:0.120px'>Kennedy Head</div>
<div class='t ' style='left:1056px;top:82px;width:260px;letter-spacing:0.341px'>(blank)</div>
<div class='t r' style='left:1317px;top:82px;width:40.40000000000009px;letter-spacing:.045px;'>1</div>
<div class='cb' style='left:851px;top:108px'></div>
<div class='t b' style='left:862.2px;top:102px;width:30px;letter-spacing:-0.338px;'>P</div>
<div class='cb' style='left:937px;top:108px'></div>
<div class='t ' style='left:947.7px;top:102px;width:105px;letter-spacing:0.120px'>Kennedy Head</div>
<div class='t ' style='left:1056px;top:102px;width:260px;letter-spacing:0.341px'>(blank)</div>
<div class='t r' style='left:1317px;top:102px;width:40.40000000000009px;letter-spacing:.045px;'>1</div>
<div class='t b r' style='left:741px;top:122px;width:101.70000000000005px;letter-spacing:0.214px;'>2013</div>
<div class='cb' style='left:800px;top:128px'></div>
<div class='cb' style='left:851px;top:128px'></div>
<div class='t b' style='left:862.2px;top:122px;width:30px;letter-spacing:-0.110px;'>D</div>
<div class='cb' style='left:937px;top:128px'></div>
<div class='t ' style='left:947.7px;top:122px;width:105px;letter-spacing:0.120px'>Kennedy Head</div>
<div class='t ' style='left:1056px;top:122px;width:260px;letter-spacing:0.341px'>(blank)</div>
<div class='t r' style='left:1317px;top:122px;width:40.40000000000009px;letter-spacing:.045px;'>1</div>
<div class='cb' style='left:851px;top:148px'></div>
<div class='t b' style='left:862.2px;top:142px;width:30px;letter-spacing:-0.338px;'>P</div>
<div class='cb' style='left:937px;top:148px'></div>
<div class='t ' style='left:947.7px;top:142px;width:105px;letter-spacing:0.120px'>Kennedy Head</div>
<div class='t ' style='left:1056px;top:142px;width:260px;letter-spacing:0.341px'>(blank)</div>
<div class='t r' style='left:1317px;top:142px;width:40.40000000000009px;letter-spacing:.045px;'>1</div>
<div class='t b r' style='left:741px;top:162px;width:101.70000000000005px;letter-spacing:0.214px;'>2012</div>
<div class='cb' style='left:800px;top:168px'></div>
<div class='cb' style='left:851px;top:168px'></div>
<div class='t b' style='left:862.2px;top:162px;width:30px;letter-spacing:-0.110px;'>D</div>
<div class='cb' style='left:937px;top:168px'></div>
<div class='t ' style='left:947.7px;top:162px;width:105px;letter-spacing:0.120px'>Kennedy Head</div>
<div class='t ' style='left:1056px;top:162px;width:260px;letter-spacing:0.341px'>(blank)</div>
<div class='t r' style='left:1317px;top:162px;width:40.40000000000009px;letter-spacing:.045px;'>1</div>
<div class='cb' style='left:851px;top:188px'></div>
<div class='t b' style='left:862.2px;top:182px;width:30px;letter-spacing:-0.338px;'>P</div>
<div class='cb' style='left:937px;top:188px'></div>
<div class='t ' style='left:947.7px;top:182px;width:105px;letter-spacing:0.120px'>Kennedy Head</div>
<div class='t ' style='left:1056px;top:182px;width:260px;letter-spacing:0.341px'>(blank)</div>
<div class='t r' style='left:1317px;top:182px;width:40.40000000000009px;letter-spacing:.045px;'>1</div>
<div class='t b r' style='left:741px;top:202px;width:101.70000000000005px;letter-spacing:0.214px;'>2011</div>
<div class='cb' style='left:800px;top:208px'></div>
<div class='cb' style='left:851px;top:208px'></div>
<div class='t b' style='left:862.2px;top:202px;width:30px;letter-spacing:-0.110px;'>D</div>
<div class='cb' style='left:937px;top:208px'></div>
<div class='t ' style='left:947.7px;top:202px;width:105px;letter-spacing:0.120px'>Kennedy Head</div>
<div class='t ' style='left:1056px;top:202px;width:260px;letter-spacing:0.341px'>(blank)</div>
<div class='t r' style='left:1317px;top:202px;width:40.40000000000009px;letter-spacing:.045px;'>1</div>
<div class='cb' style='left:851px;top:228px'></div>
<div class='t b' style='left:862.2px;top:222px;width:30px;letter-spacing:-0.338px;'>P</div>
<div class='cb' style='left:937px;top:228px'></div>
<div class='t ' style='left:947.7px;top:222px;width:105px;letter-spacing:0.120px'>Kennedy Head</div>
<div class='t ' style='left:1056px;top:222px;width:260px;letter-spacing:0.341px'>(blank)</div>
<div class='t r' style='left:1317px;top:222px;width:40.40000000000009px;letter-spacing:.045px;'>1</div>
<div class='t b r' style='left:741px;top:242px;width:101.70000000000005px;letter-spacing:0.214px;'>2010</div>
<div class='cb' style='left:800px;top:248px'></div>
<div class='cb' style='left:851px;top:248px'></div>
<div class='t b' style='left:862.2px;top:242px;width:30px;letter-spacing:-0.110px;'>D</div>
<div class='cb' style='left:937px;top:248px'></div>
<div class='t ' style='left:947.7px;top:242px;width:105px;letter-spacing:0.120px'>Kennedy Head</div>
<div class='t ' style='left:1056px;top:242px;width:260px;letter-spacing:0.341px'>(blank)</div>
<div class='t r' style='left:1317px;top:242px;width:40.40000000000009px;letter-spacing:.045px;'>1</div>
<div class='cb' style='left:851px;top:268px'></div>
<div class='t b' style='left:862.2px;top:262px;width:30px;letter-spacing:-0.338px;'>P</div>
<div class='cb' style='left:937px;top:268px'></div>
<div class='t ' style='left:947.7px;top:262px;width:105px;letter-spacing:0.120px'>Kennedy Head</div>
<div class='t ' style='left:1056px;top:262px;width:260px;letter-spacing:0.341px'>(blank)</div>
<div class='t r' style='left:1317px;top:262px;width:40.40000000000009px;letter-spacing:.045px;'>1</div>
<div class='t b r' style='left:741px;top:282px;width:101.70000000000005px;letter-spacing:0.214px;'>2009</div>
<div class='cb' style='left:800px;top:288px'></div>
<div class='cb' style='left:851px;top:288px'></div>
<div class='t b' style='left:862.2px;top:282px;width:30px;letter-spacing:-0.110px;'>D</div>
<div class='cb' style='left:937px;top:288px'></div>
<div class='t ' style='left:947.7px;top:282px;width:105px;letter-spacing:0.120px'>Kennedy Head</div>
<div class='t ' style='left:1056px;top:282px;width:260px;letter-spacing:0.341px'>(blank)</div>
<div class='t r' style='left:1317px;top:282px;width:40.40000000000009px;letter-spacing:.045px;'>1</div>
<div class='cb' style='left:851px;top:308px'></div>
<div class='t b' style='left:862.2px;top:302px;width:30px;letter-spacing:-0.338px;'>P</div>
<div class='cb' style='left:937px;top:308px'></div>
<div class='t ' style='left:947.7px;top:302px;width:105px;letter-spacing:0.120px'>Kennedy Head</div>
<div class='t ' style='left:1056px;top:302px;width:260px;letter-spacing:0.341px'>(blank)</div>
<div class='t r' style='left:1317px;top:302px;width:40.40000000000009px;letter-spacing:.045px;'>1</div>
<div class='t b r' style='left:741px;top:322px;width:101.70000000000005px;letter-spacing:0.214px;'>2008</div>
<div class='cb' style='left:800px;top:328px'></div>
<div class='cb' style='left:851px;top:328px'></div>
<div class='t b' style='left:862.2px;top:322px;width:30px;letter-spacing:-0.338px;'>P</div>
<div class='cb' style='left:937px;top:328px'></div>
<div class='t ' style='left:947.7px;top:322px;width:105px;letter-spacing:0.120px'>Kennedy Head</div>
<div class='t ' style='left:1056px;top:322px;width:260px;letter-spacing:0.341px'>(blank)</div>
<div class='t r' style='left:1317px;top:322px;width:40.40000000000009px;letter-spacing:.045px;'>1</div>
<div class='t b r' style='left:741px;top:342px;width:101.70000000000005px;letter-spacing:0.214px;'>2007</div>
<div class='cb' style='left:800px;top:348px'></div>
<div class='cb' style='left:851px;top:348px'></div>
<div class='t b' style='left:862.2px;top:342px;width:30px;letter-spacing:-0.110px;'>D</div>
<div class='cb' style='left:937px;top:348px'></div>
<div class='t ' style='left:947.7px;top:342px;width:105px;letter-spacing:0.120px'>Kennedy Head</div>
<div class='t ' style='left:1056px;top:342px;width:260px;letter-spacing:0.341px'>(blank)</div>
<div class='t r' style='left:1317px;top:342px;width:40.40000000000009px;letter-spacing:.045px;'>1</div>
<div class='cb' style='left:851px;top:368px'></div>
<div class='t b' style='left:862.2px;top:362px;width:30px;letter-spacing:-0.338px;'>P</div>
<div class='cb' style='left:937px;top:368px'></div>
<div class='t ' style='left:947.7px;top:362px;width:105px;letter-spacing:0.120px'>Kennedy Head</div>
<div class='t ' style='left:1056px;top:362px;width:260px;letter-spacing:0.341px'>(blank)</div>
<div class='t r' style='left:1317px;top:362px;width:40.40000000000009px;letter-spacing:.045px;'>1</div>
<div class='t b r' style='left:741px;top:382px;width:101.70000000000005px;letter-spacing:0.214px;'>2006</div>
<div class='cb' style='left:800px;top:388px'></div>
<div class='cb' style='left:851px;top:388px'></div>
<div class='t b' style='left:862.2px;top:382px;width:30px;letter-spacing:-0.110px;'>D</div>
<div class='cb' style='left:937px;top:388px'></div>
<div class='t ' style='left:947.7px;top:382px;width:105px;letter-spacing:0.120px'>Kennedy Head</div>
<div class='t ' style='left:1056px;top:382px;width:260px;letter-spacing:0.341px'>(blank)</div>
<div class='t r' style='left:1317px;top:382px;width:40.40000000000009px;letter-spacing:.045px;'>1</div>
<div class='cb' style='left:851px;top:408px'></div>
<div class='t b' style='left:862.2px;top:402px;width:30px;letter-spacing:-0.338px;'>P</div>
<div class='cb' style='left:937px;top:408px'></div>
<div class='t ' style='left:947.7px;top:402px;width:105px;letter-spacing:0.120px'>Kennedy Head</div>
<div class='t ' style='left:1056px;top:402px;width:260px;letter-spacing:0.341px'>(blank)</div>
<div class='t r' style='left:1317px;top:402px;width:40.40000000000009px;letter-spacing:.045px;'>1</div>
<div class='t b r' style='left:741px;top:422px;width:101.70000000000005px;letter-spacing:0.214px;'>2005</div>
<div class='cb' style='left:800px;top:428px'></div>
<div class='cb' style='left:851px;top:428px'></div>
<div class='t b' style='left:862.2px;top:422px;width:30px;letter-spacing:-0.110px;'>D</div>
<div class='cb' style='left:937px;top:428px'></div>
<div class='t ' style='left:947.7px;top:422px;width:105px;letter-spacing:0.120px'>Kennedy Head</div>
<div class='t ' style='left:1056px;top:422px;width:260px;letter-spacing:0.341px'>(blank)</div>
<div class='t r' style='left:1317px;top:422px;width:40.40000000000009px;letter-spacing:.045px;'>1</div>
<div class='cb' style='left:851px;top:448px'></div>
<div class='t b' style='left:862.2px;top:442px;width:30px;letter-spacing:-0.338px;'>P</div>
<div class='cb' style='left:937px;top:448px'></div>
<div class='t ' style='left:947.7px;top:442px;width:105px;letter-spacing:0.120px'>Kennedy Head</div>
<div class='t ' style='left:1056px;top:442px;width:260px;letter-spacing:0.341px'>(blank)</div>
<div class='t r' style='left:1317px;top:442px;width:40.40000000000009px;letter-spacing:.045px;'>1</div>
<div class='t b r' style='left:741px;top:462px;width:101.70000000000005px;letter-spacing:0.214px;'>2004</div>
<div class='cb' style='left:800px;top:468px'></div>
<div class='cb' style='left:851px;top:468px'></div>
<div class='t b' style='left:862.2px;top:462px;width:30px;letter-spacing:-0.110px;'>D</div>
<div class='cb' style='left:937px;top:468px'></div>
<div class='t ' style='left:947.7px;top:462px;width:105px;letter-spacing:0.120px'>Kennedy Head</div>
<div class='t ' style='left:1056px;top:462px;width:260px;letter-spacing:0.341px'>(blank)</div>
<div class='t r' style='left:1317px;top:462px;width:40.40000000000009px;letter-spacing:.045px;'>1</div>
<div class='cb' style='left:851px;top:488px'></div>
<div class='t b' style='left:862.2px;top:482px;width:30px;letter-spacing:-0.338px;'>P</div>
<div class='cb' style='left:937px;top:488px'></div>
<div class='t ' style='left:947.7px;top:482px;width:105px;letter-spacing:0.120px'>Kennedy Head</div>
<div class='t ' style='left:1056px;top:482px;width:260px;letter-spacing:0.341px'>(blank)</div>
<div class='t r' style='left:1317px;top:482px;width:40.40000000000009px;letter-spacing:.045px;'>1</div>
<div class='t b r' style='left:741px;top:502px;width:101.70000000000005px;letter-spacing:0.214px;'>2003</div>
<div class='cb' style='left:800px;top:508px'></div>
<div class='cb' style='left:851px;top:508px'></div>
<div class='t b' style='left:862.2px;top:502px;width:30px;letter-spacing:-0.110px;'>D</div>
<div class='cb' style='left:937px;top:508px'></div>
<div class='t ' style='left:947.7px;top:502px;width:105px;letter-spacing:0.120px'>Kennedy Head</div>
<div class='t ' style='left:1056px;top:502px;width:260px;letter-spacing:0.341px'>(blank)</div>
<div class='t r' style='left:1317px;top:502px;width:40.40000000000009px;letter-spacing:.045px;'>1</div>
<div class='t b r' style='left:741px;top:522px;width:101.70000000000005px;letter-spacing:0.214px;'>2002</div>
<div class='cb' style='left:800px;top:528px'></div>
<div class='cb' style='left:851px;top:528px'></div>
<div class='t b' style='left:862.2px;top:522px;width:30px;letter-spacing:-0.110px;'>D</div>
<div class='cb' style='left:937px;top:528px'></div>
<div class='t ' style='left:947.7px;top:522px;width:105px;letter-spacing:0.120px'>Kennedy Head</div>
<div class='t ' style='left:1056px;top:522px;width:260px;letter-spacing:0.341px'>(blank)</div>
<div class='t r' style='left:1317px;top:522px;width:40.40000000000009px;letter-spacing:.045px;'>1</div>
<div class='cb' style='left:851px;top:548px'></div>
<div class='t b' style='left:862.2px;top:542px;width:30px;letter-spacing:-0.338px;'>P</div>
<div class='cb' style='left:937px;top:548px'></div>
<div class='t ' style='left:947.7px;top:542px;width:105px;letter-spacing:0.120px'>Kennedy Head</div>
<div class='t ' style='left:1056px;top:542px;width:260px;letter-spacing:0.341px'>(blank)</div>
<div class='t r' style='left:1317px;top:542px;width:40.40000000000009px;letter-spacing:.045px;'>1</div>
<div class='t b r' style='left:741px;top:562px;width:101.70000000000005px;letter-spacing:0.214px;'>2000</div>
<div class='cb' style='left:800px;top:568px'></div>
<div class='cb' style='left:851px;top:568px'></div>
<div class='t b' style='left:862.2px;top:562px;width:30px;letter-spacing:-0.338px;'>P</div>
<div class='cb' style='left:937px;top:568px'></div>
<div class='t ' style='left:947.7px;top:562px;width:105px;letter-spacing:0.120px'>Kennedy Head</div>
<div class='t ' style='left:1056px;top:562px;width:260px;letter-spacing:0.341px'>(blank)</div>
<div class='t r' style='left:1317px;top:562px;width:40.40000000000009px;letter-spacing:.045px;'>1</div>
<div class='t b r' style='left:741px;top:582px;width:101.70000000000005px;letter-spacing:0.214px;'>1997</div>
<div class='cb' style='left:800px;top:588px'></div>
<div class='cb' style='left:851px;top:588px'></div>
<div class='t b' style='left:862.2px;top:582px;width:30px;letter-spacing:-0.110px;'>D</div>
<div class='cb' style='left:937px;top:588px'></div>
<div class='t ' style='left:947.7px;top:582px;width:105px;letter-spacing:0.120px'>Kennedy Head</div>
<div class='t ' style='left:1056px;top:582px;width:260px;letter-spacing:0.341px'>(blank)</div>
<div class='t r' style='left:1317px;top:582px;width:40.40000000000009px;letter-spacing:.045px;'>1</div>
<div class='cb' style='left:851px;top:608px'></div>
<div class='t b' style='left:862.2px;top:602px;width:30px;letter-spacing:-0.338px;'>P</div>
<div class='cb' style='left:937px;top:608px'></div>
<div class='t ' style='left:947.7px;top:602px;width:105px;letter-spacing:0.120px'>Kennedy Head</div>
<div class='t ' style='left:1056px;top:602px;width:260px;letter-spacing:0.341px'>(blank)</div>
<div class='t r' style='left:1317px;top:602px;width:40.40000000000009px;letter-spacing:.045px;'>1</div>
<div class='t b r' style='left:741px;top:622px;width:101.70000000000005px;letter-spacing:0.214px;'>1996</div>
<div class='cb' style='left:800px;top:628px'></div>
<div class='cb' style='left:851px;top:628px'></div>
<div class='t b' style='left:862.2px;top:622px;width:30px;letter-spacing:-0.338px;'>P</div>
<div class='cb' style='left:937px;top:628px'></div>
<div class='t ' style='left:947.7px;top:622px;width:105px;letter-spacing:0.120px'>Kennedy Head</div>
<div class='t ' style='left:1056px;top:622px;width:260px;letter-spacing:0.341px'>(blank)</div>
<div class='t r' style='left:1317px;top:622px;width:40.40000000000009px;letter-spacing:.045px;'>1</div>
<div class='t b r' style='left:741px;top:642px;width:101.70000000000005px;letter-spacing:0.214px;'>1995</div>
<div class='cb' style='left:800px;top:648px'></div>
<div class='cb' style='left:851px;top:648px'></div>
<div class='t b' style='left:862.2px;top:642px;width:30px;letter-spacing:-0.338px;'>P</div>
<div class='cb' style='left:937px;top:648px'></div>
<div class='t ' style='left:947.7px;top:642px;width:105px;letter-spacing:0.120px'>Kennedy Head</div>
<div class='t ' style='left:1056px;top:642px;width:260px;letter-spacing:0.341px'>(blank)</div>
<div class='t r' style='left:1317px;top:642px;width:40.40000000000009px;letter-spacing:.045px;'>1</div>
<div class='t b r' style='left:741px;top:662px;width:101.70000000000005px;letter-spacing:0.214px;'>1994</div>
<div class='cb' style='left:800px;top:668px'></div>
<div class='cb' style='left:851px;top:668px'></div>
<div class='t b' style='left:862.2px;top:662px;width:30px;letter-spacing:-0.338px;'>P</div>
<div class='cb' style='left:937px;top:668px'></div>
<div class='t ' style='left:947.7px;top:662px;width:105px;letter-spacing:0.120px'>Kennedy Head</div>
<div class='t ' style='left:1056px;top:662px;width:260px;letter-spacing:0.341px'>(blank)</div>
<div class='t r' style='left:1317px;top:662px;width:40.40000000000009px;letter-spacing:.045px;'>1</div>
<div class='t b r' style='left:741px;top:682px;width:101.70000000000005px;letter-spacing:0.214px;'>1992</div>
<div class='cb' style='left:800px;top:688px'></div>
<div class='cb' style='left:851px;top:688px'></div>
<div class='t b' style='left:862.2px;top:682px;width:30px;letter-spacing:-0.338px;'>P</div>
<div class='cb' style='left:937px;top:688px'></div>
<div class='t ' style='left:947.7px;top:682px;width:105px;letter-spacing:0.120px'>Kennedy Head</div>
<div class='t ' style='left:1056px;top:682px;width:260px;letter-spacing:0.341px'>(blank)</div>
<div class='t r' style='left:1317px;top:682px;width:40.40000000000009px;letter-spacing:.045px;'>1</div>
<div class='t b r' style='left:741px;top:702px;width:101.70000000000005px;letter-spacing:0.214px;'>1991</div>
<div class='cb' style='left:800px;top:708px'></div>
<div class='cb' style='left:851px;top:708px'></div>
<div class='t b' style='left:862.2px;top:702px;width:30px;letter-spacing:-0.338px;'>P</div>
<div class='cb' style='left:937px;top:708px'></div>
<div class='t ' style='left:947.7px;top:702px;width:105px;letter-spacing:0.120px'>Kennedy Head</div>
<div class='t ' style='left:1056px;top:702px;width:260px;letter-spacing:0.341px'>(blank)</div>
<div class='t r' style='left:1317px;top:702px;width:40.40000000000009px;letter-spacing:.045px;'>1</div>
<div class='t b r' style='left:741px;top:722px;width:101.70000000000005px;letter-spacing:0.214px;'>1990</div>
<div class='cb' style='left:800px;top:728px'></div>
<div class='cb' style='left:851px;top:728px'></div>
<div class='t b' style='left:862.2px;top:722px;width:30px;letter-spacing:-0.110px;'>D</div>
<div class='cb' style='left:937px;top:728px'></div>
<div class='t ' style='left:947.7px;top:722px;width:105px;letter-spacing:0.120px'>Kennedy Head</div>
<div class='t ' style='left:1056px;top:722px;width:260px;letter-spacing:0.341px'>(blank)</div>
<div class='t r' style='left:1317px;top:722px;width:40.40000000000009px;letter-spacing:.045px;'>1</div>
<div class='cb' style='left:851px;top:748px'></div>
<div class='t b' style='left:862.2px;top:742px;width:30px;letter-spacing:-0.338px;'>P</div>
<div class='cb' style='left:937px;top:748px'></div>
<div class='t ' style='left:947.7px;top:742px;width:105px;letter-spacing:0.120px'>Kennedy Head</div>
<div class='t ' style='left:1056px;top:742px;width:260px;letter-spacing:0.341px'>(blank)</div>
<div class='t r' style='left:1317px;top:742px;width:40.40000000000009px;letter-spacing:.045px;'>1</div>
<div class='t b r' style='left:741px;top:762px;width:101.70000000000005px;letter-spacing:0.214px;'>1989</div>
<div class='cb' style='left:800px;top:768px'></div>
<div class='cb' style='left:851px;top:768px'></div>
<div class='t b' style='left:862.2px;top:762px;width:30px;letter-spacing:-0.338px;'>P</div>
<div class='cb' style='left:937px;top:768px'></div>
<div class='t ' style='left:947.7px;top:762px;width:105px;letter-spacing:0.120px'>Kennedy Head</div>
<div class='t ' style='left:1056px;top:762px;width:260px;letter-spacing:0.341px'>(blank)</div>
<div class='t r' style='left:1317px;top:762px;width:40.40000000000009px;letter-spacing:.045px;'>1</div>
<div class='t b r' style='left:741px;top:782px;width:101.70000000000005px;letter-spacing:0.214px;'>1988</div>
<div class='cb' style='left:800px;top:788px'></div>
<div class='cb' style='left:851px;top:788px'></div>
<div class='t b' style='left:862.2px;top:782px;width:30px;letter-spacing:-0.338px;'>P</div>
<div class='cb' style='left:937px;top:788px'></div>
<div class='t ' style='left:947.7px;top:782px;width:105px;letter-spacing:0.120px'>Kennedy Head</div>
<div class='t ' style='left:1056px;top:782px;width:260px;letter-spacing:0.341px'>(blank)</div>
<div class='t r' style='left:1317px;top:782px;width:40.40000000000009px;letter-spacing:.045px;'>1</div>
<div class='t b r' style='left:741px;top:802px;width:101.70000000000005px;letter-spacing:0.214px;'>1987</div>
<div class='cb' style='left:800px;top:808px'></div>
<div class='cb' style='left:851px;top:808px'></div>
<div class='t b' style='left:862.2px;top:802px;width:30px;letter-spacing:-0.110px;'>D</div>
<div class='cb' style='left:937px;top:808px'></div>
<div class='t ' style='left:947.7px;top:802px;width:105px;letter-spacing:0.120px'>Kennedy Head</div>
<div class='t ' style='left:1056px;top:802px;width:260px;letter-spacing:0.341px'>(blank)</div>
<div class='t r' style='left:1317px;top:802px;width:40.40000000000009px;letter-spacing:.045px;'>1</div>
<div class='cb' style='left:851px;top:828px'></div>
<div class='t b' style='left:862.2px;top:822px;width:30px;letter-spacing:-0.338px;'>P</div>
<div class='cb' style='left:937px;top:828px'></div>
<div class='t ' style='left:947.7px;top:822px;width:105px;letter-spacing:0.120px'>Kennedy Head</div>
<div class='t ' style='left:1056px;top:822px;width:260px;letter-spacing:0.341px'>(blank)</div>
<div class='t r' style='left:1317px;top:822px;width:40.40000000000009px;letter-spacing:.045px;'>1</div>
<div class='t b r' style='left:741px;top:842px;width:101.70000000000005px;letter-spacing:0.214px;'>1986</div>
<div class='cb' style='left:800px;top:848px'></div>
<div class='cb' style='left:851px;top:848px'></div>
<div class='t b' style='left:862.2px;top:842px;width:30px;letter-spacing:-0.110px;'>D</div>
<div class='cb' style='left:937px;top:848px'></div>
<div class='t ' style='left:947.7px;top:842px;width:105px;letter-spacing:0.120px'>Kennedy Head</div>
<div class='t ' style='left:1056px;top:842px;width:260px;letter-spacing:0.341px'>(blank)</div>
<div class='t r' style='left:1317px;top:842px;width:40.40000000000009px;letter-spacing:.045px;'>1</div>
<div class='cb' style='left:851px;top:868px'></div>
<div class='t b' style='left:862.2px;top:862px;width:30px;letter-spacing:-0.338px;'>P</div>
<div class='cb' style='left:937px;top:868px'></div>
<div class='t ' style='left:947.7px;top:862px;width:105px;letter-spacing:0.120px'>Kennedy Head</div>
<div class='t ' style='left:1056px;top:862px;width:260px;letter-spacing:0.341px'>(blank)</div>
<div class='t r' style='left:1317px;top:862px;width:40.40000000000009px;letter-spacing:.045px;'>1</div>
<div style='left:1399px;top:40px;width:499px;height:42px;background:#4db4d4;border-top:2px solid #3a93b0'></div>
<div style='left:1399px;top:82px;width:106px;height:805px;background:#e6fbff'></div>
<div class='t b w' style='left:1402.1px;top:42px;width:200px;letter-spacing:.38px'>Count of Mint</div>
<div class='t b w' style='left:1402.0px;top:62px;width:104px;letter-spacing:0.55px;transform:scaleX(1.075);transform-origin:0 50%'>Year</div>
<div class='dd' style='left:1488px;top:63px'><svg style='left:0;top:0' width='16' height='16' viewBox='0 0 16 16'><path d='M2.6 9.4h5l-2.5 2.7z' fill='#6e7878'/><path d='M10.5 3v7.6M8.9 9.2l1.6 1.9 1.6-1.9' stroke='#3c4444' stroke-width='1' fill='none'/></svg></div>
<div class='t b w' style='left:1506.5px;top:62px;width:85px;letter-spacing:0.5px;transform:scaleX(1.04);transform-origin:0 50%'>Mint</div>
<div class='dd' style='left:1574px;top:63px'><svg style='left:0;top:0' width='16' height='16' viewBox='0 0 16 16'><path d='M1.6 9.4h5l-2.5 2.7z' fill='#6e7878'/><path d='M4.6 3h9.4l-3.3 3.6h-2.8z' fill='#6e7878'/><path d='M7.9 6.4h2.8v4.4h-2.8z' fill='#3f454f'/></svg></div>
<div class='t b w' style='left:1594.4px;top:62px;width:165px;letter-spacing:-0.07px;transform:scaleX(1);transform-origin:0 50%'>Type</div>
<div class='dd' style='left:1740px;top:63px'><svg style='left:0;top:0' width='16' height='16' viewBox='0 0 16 16'><path d='M4.2 6.6h7.2l-3.6 3.8z' fill='#6e7878'/></svg></div>
<div class='t b w' style='left:1758.5px;top:62px;width:243px;letter-spacing:0.45px;transform:scaleX(1.03);transform-origin:0 50%'>Detail</div>
<div class='t b r' style='left:1400px;top:82px;width:101.70000000000005px;letter-spacing:0.214px;'>2014</div>
<div class='cb' style='left:1459px;top:88px'></div>
<div class='cb' style='left:1510px;top:88px'></div>
<div class='t b' style='left:1521.2px;top:82px;width:30px;letter-spacing:-0.338px;'>P</div>
<div class='cb' style='left:1596px;top:88px'></div>
<div class='t ' style='left:1606.7px;top:82px;width:149px;letter-spacing:0.082px'>America The Beautiful</div>
<div class='t ' style='left:1759px;top:82px;width:139px;letter-spacing:.045px;'>Great Smoky Mountains National Park</div>
<div class='t ' style='left:1759px;top:102px;width:139px;letter-spacing:.045px;'>Shenandoah National Park</div>
<div class='t ' style='left:1759px;top:122px;width:139px;letter-spacing:.045px;'>Arches National Park</div>
<div class='t ' style='left:1759px;top:142px;width:139px;letter-spacing:.045px;'>Great Sand Dunes National Park</div>
<div class='t ' style='left:1759px;top:162px;width:139px;letter-spacing:.045px;'>Everglades National Park</div>
<div class='cb' style='left:1510px;top:188px'></div>
<div class='t b' style='left:1521.2px;top:182px;width:30px;letter-spacing:-0.110px;'>D</div>
<div class='cb' style='left:1596px;top:188px'></div>
<div class='t ' style='left:1606.7px;top:182px;width:149px;letter-spacing:0.082px'>America The Beautiful</div>
<div class='t ' style='left:1759px;top:182px;width:139px;letter-spacing:.045px;'>Great Smoky Mountains National Park</div>
<div class='t ' style='left:1759px;top:202px;width:139px;letter-spacing:.045px;'>Shenandoah National Park</div>
<div class='t ' style='left:1759px;top:222px;width:139px;letter-spacing:.045px;'>Arches National Park</div>
<div class='t ' style='left:1759px;top:242px;width:139px;letter-spacing:.045px;'>Great Sand Dunes National Park</div>
<div class='t ' style='left:1759px;top:262px;width:139px;letter-spacing:.045px;'>Everglades National Park</div>
<div class='t b r' style='left:1400px;top:282px;width:101.70000000000005px;letter-spacing:0.214px;'>2013</div>
<div class='cb' style='left:1459px;top:288px'></div>
<div class='cb' style='left:1510px;top:288px'></div>
<div class='t b' style='left:1521.2px;top:282px;width:30px;letter-spacing:-0.338px;'>P</div>
<div class='cb' style='left:1596px;top:288px'></div>
<div class='t ' style='left:1606.7px;top:282px;width:149px;letter-spacing:0.082px'>America The Beautiful</div>
<div class='t ' style='left:1759px;top:282px;width:139px;letter-spacing:.045px;'>White Mountain National Forest</div>
<div class='t ' style='left:1759px;top:302px;width:139px;letter-spacing:.045px;'>Perry&#x27;s Victory and International Peace Memorial</div>
<div class='t ' style='left:1759px;top:322px;width:139px;letter-spacing:.045px;'>Great Basin National Park</div>
<div class='t ' style='left:1759px;top:342px;width:139px;letter-spacing:.045px;'>Fort McHenry National Monument</div>
<div class='t ' style='left:1759px;top:362px;width:139px;letter-spacing:.045px;'>Mount Rushmore National Memorial</div>
<div class='cb' style='left:1510px;top:388px'></div>
<div class='t b' style='left:1521.2px;top:382px;width:30px;letter-spacing:-0.110px;'>D</div>
<div class='cb' style='left:1596px;top:388px'></div>
<div class='t ' style='left:1606.7px;top:382px;width:149px;letter-spacing:0.082px'>America The Beautiful</div>
<div class='t ' style='left:1759px;top:382px;width:139px;letter-spacing:.045px;'>White Mountain National Forest</div>
<div class='t ' style='left:1759px;top:402px;width:139px;letter-spacing:.045px;'>Great Basin National Park</div>
<div class='t ' style='left:1759px;top:422px;width:139px;letter-spacing:.045px;'>Fort McHenry National Monument</div>
<div class='t ' style='left:1759px;top:442px;width:139px;letter-spacing:.045px;'>Mount Rushmore National Memorial</div>
<div class='t b r' style='left:1400px;top:462px;width:101.70000000000005px;letter-spacing:0.214px;'>2012</div>
<div class='cb' style='left:1459px;top:468px'></div>
<div class='cb' style='left:1510px;top:468px'></div>
<div class='t b' style='left:1521.2px;top:462px;width:30px;letter-spacing:-0.338px;'>P</div>
<div class='cb' style='left:1596px;top:468px'></div>
<div class='t ' style='left:1606.7px;top:462px;width:149px;letter-spacing:0.082px'>America The Beautiful</div>
<div class='t ' style='left:1759px;top:462px;width:139px;letter-spacing:.045px;'>Denali National Park</div>
<div class='t ' style='left:1759px;top:482px;width:139px;letter-spacing:.045px;'>Hawai&#x27;I Volcanoes National Park</div>
<div class='t ' style='left:1759px;top:502px;width:139px;letter-spacing:.045px;'>Arcadia National Park</div>
<div class='t ' style='left:1759px;top:522px;width:139px;letter-spacing:.045px;'>Chaco Culture National Historical Park</div>
<div class='t ' style='left:1759px;top:542px;width:139px;letter-spacing:.045px;'>El Yunque National Forest</div>
<div class='cb' style='left:1510px;top:568px'></div>
<div class='t b' style='left:1521.2px;top:562px;width:30px;letter-spacing:-0.110px;'>D</div>
<div class='cb' style='left:1596px;top:568px'></div>
<div class='t ' style='left:1606.7px;top:562px;width:149px;letter-spacing:0.082px'>America The Beautiful</div>
<div class='t ' style='left:1759px;top:562px;width:139px;letter-spacing:.045px;'>Denali National Park</div>
<div class='t ' style='left:1759px;top:582px;width:139px;letter-spacing:.045px;'>Arcadia National Park</div>
<div class='t ' style='left:1759px;top:602px;width:139px;letter-spacing:.045px;'>Chaco Culture National Historical Park</div>
<div class='t ' style='left:1759px;top:622px;width:139px;letter-spacing:.045px;'>El Yunque National Forest</div>
<div class='t b r' style='left:1400px;top:642px;width:101.70000000000005px;letter-spacing:0.214px;'>2011</div>
<div class='cb' style='left:1459px;top:648px'></div>
<div class='cb' style='left:1510px;top:648px'></div>
<div class='t b' style='left:1521.2px;top:642px;width:30px;letter-spacing:-0.338px;'>P</div>
<div class='cb' style='left:1596px;top:648px'></div>
<div class='t ' style='left:1606.7px;top:642px;width:149px;letter-spacing:0.082px'>America The Beautiful</div>
<div class='t ' style='left:1759px;top:642px;width:139px;letter-spacing:.045px;'>Gettysburg National Military Park</div>
<div class='t ' style='left:1759px;top:662px;width:139px;letter-spacing:.045px;'>Glacier National Park</div>
<div class='t ' style='left:1759px;top:682px;width:139px;letter-spacing:.045px;'>Olympic National Park</div>
<div class='t ' style='left:1759px;top:702px;width:139px;letter-spacing:.045px;'>Vicksburg National Military Park</div>
<div class='t ' style='left:1759px;top:722px;width:139px;letter-spacing:.045px;'>Chickasaw National Recreation Area</div>
<div class='cb' style='left:1510px;top:748px'></div>
<div class='t b' style='left:1521.2px;top:742px;width:30px;letter-spacing:-0.110px;'>D</div>
<div class='cb' style='left:1596px;top:748px'></div>
<div class='t ' style='left:1606.7px;top:742px;width:149px;letter-spacing:0.082px'>America The Beautiful</div>
<div class='t ' style='left:1759px;top:742px;width:139px;letter-spacing:.045px;'>Gettysburg National Military Park</div>
<div class='t ' style='left:1759px;top:762px;width:139px;letter-spacing:.045px;'>Glacier National Park</div>
<div class='t ' style='left:1759px;top:782px;width:139px;letter-spacing:.045px;'>Olympic National Park</div>
<div class='t ' style='left:1759px;top:802px;width:139px;letter-spacing:.045px;'>Vicksburg National Military Park</div>
<div class='t ' style='left:1759px;top:822px;width:139px;letter-spacing:.045px;'>Chickasaw National Recreation Area</div>
<div class='t b r' style='left:1400px;top:842px;width:101.70000000000005px;letter-spacing:0.214px;'>2010</div>
<div class='cb' style='left:1459px;top:848px'></div>
<div class='cb' style='left:1510px;top:848px'></div>
<div class='t b' style='left:1521.2px;top:842px;width:30px;letter-spacing:-0.338px;'>P</div>
<div class='cb' style='left:1596px;top:848px'></div>
<div class='t ' style='left:1606.7px;top:842px;width:149px;letter-spacing:0.082px'>America The Beautiful</div>
<div class='t ' style='left:1759px;top:842px;width:139px;letter-spacing:.045px;'>Hot Springs National Park</div>
<div class='t ' style='left:1759px;top:862px;width:139px;letter-spacing:.045px;'>Yellowstone National Park</div>
<div style='left:1589px;top:520px;width:169px;height:23px;border:2px solid #217346'></div>
<div style='left:1753px;top:538px;width:7px;height:7px;background:#217346;border:1px solid #fff'></div>
<div style='left:0;top:0;width:1898px;height:21px;background:#fff'></div>
<div style='left:1591px;top:0px;width:166px;height:21px;background:#ebebeb'></div>
<div style='left:1590px;top:20px;width:167px;height:2px;background:#217346'></div>
<div style='left:34px;top:21px;width:1556px;height:1px;background:#ababab'></div>
<div style='left:1758px;top:21px;width:140px;height:1px;background:#ababab'></div>
<div class='hd' style='left:34px;top:2px;width:104px;color:#444'>A</div>
<div style='left:138px;top:4px;width:1px;height:17px;background:#dadada'></div>
<div class='hd' style='left:139px;top:2px;width:51px;color:#444'>B</div>
<div style='left:190px;top:4px;width:1px;height:17px;background:#dadada'></div>
<div class='hd' style='left:191px;top:2px;width:142px;color:#444'>C</div>
<div style='left:333px;top:4px;width:1px;height:17px;background:#dadada'></div>
<div class='hd' style='left:334px;top:2px;width:323px;color:#444'>D</div>
<div style='left:657px;top:4px;width:1px;height:17px;background:#dadada'></div>
<div class='hd' style='left:658px;top:2px;width:43px;color:#444'>E</div>
<div style='left:701px;top:4px;width:1px;height:17px;background:#dadada'></div>
<div class='hd' style='left:702px;top:2px;width:38px;color:#444'>F</div>
<div style='left:740px;top:4px;width:1px;height:17px;background:#dadada'></div>
<div class='hd' style='left:741px;top:2px;width:104px;color:#444'>G</div>
<div style='left:845px;top:4px;width:1px;height:17px;background:#dadada'></div>
<div class='hd' style='left:846px;top:2px;width:85px;color:#444'>H</div>
<div style='left:931px;top:4px;width:1px;height:17px;background:#dadada'></div>
<div class='hd' style='left:932px;top:2px;width:121px;color:#444'>I</div>
<div style='left:1053px;top:4px;width:1px;height:17px;background:#dadada'></div>
<div class='hd' style='left:1054px;top:2px;width:262px;color:#444'>J</div>
<div style='left:1316px;top:4px;width:1px;height:17px;background:#dadada'></div>
<div class='hd' style='left:1317px;top:2px;width:43px;color:#444'>K</div>
<div style='left:1360px;top:4px;width:1px;height:17px;background:#dadada'></div>
<div class='hd' style='left:1361px;top:2px;width:38px;color:#444'>L</div>
<div style='left:1399px;top:4px;width:1px;height:17px;background:#dadada'></div>
<div class='hd' style='left:1400px;top:2px;width:104px;color:#444'>M</div>
<div style='left:1504px;top:4px;width:1px;height:17px;background:#dadada'></div>
<div class='hd' style='left:1505px;top:2px;width:85px;color:#444'>N</div>
<div class='hd' style='left:1591px;top:2px;width:165px;color:#217346'>O</div>
<div style='left:0;top:22px;width:33px;height:865px;background:#fff'></div>
<div style='left:33px;top:21px;width:1px;height:866px;background:#ababab'></div>
<div style='left:33px;top:4px;width:1px;height:17px;background:#e4e4e4'></div>
<svg style='left:16px;top:4px' width='14' height='14' viewBox='0 0 14 14'><path d='M13 1v12H1z' fill='#dedede'/></svg>
<div class='hd' style='left:0;top:22px;width:33px'>1</div>
<div style='left:0;top:41px;width:33px;height:1px;background:#ebebeb'></div>
<div class='hd' style='left:0;top:42px;width:33px'>4</div>
<div style='left:0;top:61px;width:33px;height:1px;background:#ebebeb'></div>
<div class='hd' style='left:0;top:62px;width:33px'>5</div>
<div style='left:0;top:81px;width:33px;height:1px;background:#ebebeb'></div>
<div class='hd' style='left:0;top:82px;width:33px'>6</div>
<div style='left:0;top:101px;width:33px;height:1px;background:#ebebeb'></div>
<div class='hd' style='left:0;top:102px;width:33px'>7</div>
<div style='left:0;top:121px;width:33px;height:1px;background:#ebebeb'></div>
<div class='hd' style='left:0;top:122px;width:33px'>8</div>
<div style='left:0;top:141px;width:33px;height:1px;background:#ebebeb'></div>
<div class='hd' style='left:0;top:142px;width:33px'>9</div>
<div style='left:0;top:161px;width:33px;height:1px;background:#ebebeb'></div>
<div class='hd' style='left:0;top:162px;width:33px'>10</div>
<div style='left:0;top:181px;width:33px;height:1px;background:#ebebeb'></div>
<div class='hd' style='left:0;top:182px;width:33px'>11</div>
<div style='left:0;top:201px;width:33px;height:1px;background:#ebebeb'></div>
<div class='hd' style='left:0;top:202px;width:33px'>12</div>
<div style='left:0;top:221px;width:33px;height:1px;background:#ebebeb'></div>
<div class='hd' style='left:0;top:222px;width:33px'>13</div>
<div style='left:0;top:241px;width:33px;height:1px;background:#ebebeb'></div>
<div class='hd' style='left:0;top:242px;width:33px'>14</div>
<div style='left:0;top:261px;width:33px;height:1px;background:#ebebeb'></div>
<div class='hd' style='left:0;top:262px;width:33px'>15</div>
<div style='left:0;top:281px;width:33px;height:1px;background:#ebebeb'></div>
<div class='hd' style='left:0;top:282px;width:33px'>16</div>
<div style='left:0;top:301px;width:33px;height:1px;background:#ebebeb'></div>
<div class='hd' style='left:0;top:302px;width:33px'>17</div>
<div style='left:0;top:321px;width:33px;height:1px;background:#ebebeb'></div>
<div class='hd' style='left:0;top:322px;width:33px'>18</div>
<div style='left:0;top:341px;width:33px;height:1px;background:#ebebeb'></div>
<div class='hd' style='left:0;top:342px;width:33px'>19</div>
<div style='left:0;top:361px;width:33px;height:1px;background:#ebebeb'></div>
<div class='hd' style='left:0;top:362px;width:33px'>20</div>
<div style='left:0;top:381px;width:33px;height:1px;background:#ebebeb'></div>
<div class='hd' style='left:0;top:382px;width:33px'>21</div>
<div style='left:0;top:401px;width:33px;height:1px;background:#ebebeb'></div>
<div class='hd' style='left:0;top:402px;width:33px'>22</div>
<div style='left:0;top:421px;width:33px;height:1px;background:#ebebeb'></div>
<div class='hd' style='left:0;top:422px;width:33px'>23</div>
<div style='left:0;top:441px;width:33px;height:1px;background:#ebebeb'></div>
<div class='hd' style='left:0;top:442px;width:33px'>24</div>
<div style='left:0;top:461px;width:33px;height:1px;background:#ebebeb'></div>
<div class='hd' style='left:0;top:462px;width:33px'>25</div>
<div style='left:0;top:481px;width:33px;height:1px;background:#ebebeb'></div>
<div class='hd' style='left:0;top:482px;width:33px'>26</div>
<div style='left:0;top:501px;width:33px;height:1px;background:#ebebeb'></div>
<div class='hd' style='left:0;top:502px;width:33px'>27</div>
<div style='left:0;top:521px;width:33px;height:1px;background:#ebebeb'></div>
<div style='left:0;top:522px;width:32px;height:20px;background:#ebebeb'></div>
<div style='left:32px;top:521px;width:2px;height:21px;background:#217346'></div>
<div class='hd' style='left:0;top:522px;width:33px;color:#217346;font-weight:bold'>28</div>
<div style='left:0;top:541px;width:33px;height:1px;background:#ebebeb'></div>
<div class='hd' style='left:0;top:542px;width:33px'>29</div>
<div style='left:0;top:561px;width:33px;height:1px;background:#ebebeb'></div>
<div class='hd' style='left:0;top:562px;width:33px'>30</div>
<div style='left:0;top:581px;width:33px;height:1px;background:#ebebeb'></div>
<div class='hd' style='left:0;top:582px;width:33px'>31</div>
<div style='left:0;top:601px;width:33px;height:1px;background:#ebebeb'></div>
<div class='hd' style='left:0;top:602px;width:33px'>32</div>
<div style='left:0;top:621px;width:33px;height:1px;background:#ebebeb'></div>
<div class='hd' style='left:0;top:622px;width:33px'>33</div>
<div style='left:0;top:641px;width:33px;height:1px;background:#ebebeb'></div>
<div class='hd' style='left:0;top:642px;width:33px'>34</div>
<div style='left:0;top:661px;width:33px;height:1px;background:#ebebeb'></div>
<div class='hd' style='left:0;top:662px;width:33px'>35</div>
<div style='left:0;top:681px;width:33px;height:1px;background:#ebebeb'></div>
<div class='hd' style='left:0;top:682px;width:33px'>36</div>
<div style='left:0;top:701px;width:33px;height:1px;background:#ebebeb'></div>
<div class='hd' style='left:0;top:702px;width:33px'>37</div>
<div style='left:0;top:721px;width:33px;height:1px;background:#ebebeb'></div>
<div class='hd' style='left:0;top:722px;width:33px'>38</div>
<div style='left:0;top:741px;width:33px;height:1px;background:#ebebeb'></div>
<div class='hd' style='left:0;top:742px;width:33px'>39</div>
<div style='left:0;top:761px;width:33px;height:1px;background:#ebebeb'></div>
<div class='hd' style='left:0;top:762px;width:33px'>40</div>
<div style='left:0;top:781px;width:33px;height:1px;background:#ebebeb'></div>
<div class='hd' style='left:0;top:782px;width:33px'>41</div>
<div style='left:0;top:801px;width:33px;height:1px;background:#ebebeb'></div>
<div class='hd' style='left:0;top:802px;width:33px'>42</div>
<div style='left:0;top:821px;width:33px;height:1px;background:#ebebeb'></div>
<div class='hd' style='left:0;top:822px;width:33px'>43</div>
<div style='left:0;top:841px;width:33px;height:1px;background:#ebebeb'></div>
<div class='hd' style='left:0;top:842px;width:33px'>44</div>
<div style='left:0;top:861px;width:33px;height:1px;background:#ebebeb'></div>
<div class='hd' style='left:0;top:862px;width:33px'>45</div>
<div style='left:0;top:881px;width:33px;height:1px;background:#ebebeb'></div>
<div class='hd' style='left:0;top:882px;width:33px'>46</div>
<div style='left:0;top:901px;width:33px;height:1px;background:#ebebeb'></div>
<div style='left:0;top:43px;width:33px;height:1px;background:#ebebeb'></div></div>
<span class='u' style='left:693px;top:6.02px;font-size:11.5px;line-height:14px;color:#b3488f;font-weight:normal;transform:scaleX(0.8673);'>PIVOTTABLE TOOLS</span>
<span class='u' style='left:840px;top:5.84px;font-size:12px;line-height:14px;color:#444;font-weight:normal;transform:scaleX(0.9566);'>Allan&#x27;s uscollectacoin13 v5.2-2014.xlsx - Excel</span>
<span class='u' style='left:19px;top:30.84px;font-size:12px;line-height:14px;color:#fff;font-weight:normal;transform:scaleX(0.8286);'>FILE</span>
<span class='u' style='left:76px;top:30.84px;font-size:12px;line-height:14px;color:#444;font-weight:normal;transform:scaleX(0.9722);'>HOME</span>
<span class='u' style='left:140px;top:30.84px;font-size:12px;line-height:14px;color:#444;font-weight:normal;transform:scaleX(0.8564);'>INSERT</span>
<span class='u' style='left:207px;top:30.84px;font-size:12px;line-height:14px;color:#444;font-weight:normal;transform:scaleX(0.9287);'>PAGE LAYOUT</span>
<span class='u' style='left:313px;top:30.84px;font-size:12px;line-height:14px;color:#444;font-weight:normal;transform:scaleX(0.9149);'>FORMULAS</span>
<span class='u' style='left:403px;top:30.84px;font-size:12px;line-height:14px;color:#444;font-weight:normal;transform:scaleX(1.0257);'>DATA</span>
<span class='u' style='left:463px;top:30.84px;font-size:12px;line-height:14px;color:#444;font-weight:normal;transform:scaleX(0.8450);'>REVIEW</span>
<span class='u' style='left:532px;top:30.84px;font-size:12px;line-height:14px;color:#444;font-weight:normal;transform:scaleX(0.8804);'>VIEW</span>
<span class='u' style='left:588px;top:30.84px;font-size:12px;line-height:14px;color:#444;font-weight:normal;transform:scaleX(0.8452);'>DEVELOPER</span>
<span class='u' style='left:681px;top:30.84px;font-size:12px;line-height:14px;color:#444;font-weight:normal;transform:scaleX(0.9480);'>ANALYZE</span>
<span class='u' style='left:761px;top:30.84px;font-size:12px;line-height:14px;color:#444;font-weight:normal;transform:scaleX(0.8694);'>DESIGN</span>
<span class='u' style='left:1810px;top:29.84px;font-size:12.3px;line-height:15px;color:#444;font-weight:normal;transform:scaleX(0.9808);'>Allan Tribe</span>
<span class='u' style='left:12px;top:73.67px;font-size:12.5px;line-height:15px;color:#444;font-weight:normal;transform:scaleX(0.9946);'>O28</span>
<span class='u' style='left:116px;top:995.50px;font-size:13px;line-height:16px;color:#262626;font-weight:normal;transform:scaleX(0.9829);'>The Coin Collection</span>
<span class='u' style='left:258px;top:995.50px;font-size:13px;line-height:16px;color:#444;font-weight:normal;transform:scaleX(0.9803);'>Proof Sets</span>
<span class='u' style='left:346px;top:995.50px;font-size:13px;line-height:16px;color:#444;font-weight:normal;transform:scaleX(0.9517);'>Statistics</span>
<span class='u' style='left:423.5px;top:995.10px;font-size:13px;line-height:16px;color:#217346;font-weight:bold;transform:scaleX(1.0088);'>Don&#x27;t Have By Year</span>
<span class='u' style='left:7.5px;top:1022.26px;font-size:10.8px;line-height:13px;color:#fff;font-weight:normal;transform:scaleX(0.8734);-webkit-text-stroke:.35px #fff;'>READY</span>
<span class='u' style='left:1885px;top:1022.26px;font-size:10.8px;line-height:13px;color:#fff;font-weight:normal;transform:scaleX(0.9413);-webkit-text-stroke:.3px #fff;'>130%</span>
</body></html>
